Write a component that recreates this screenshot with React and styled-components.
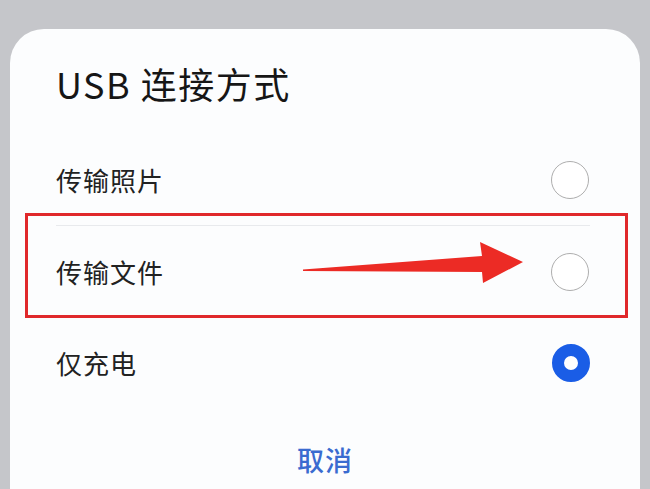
import React from 'react';
import styled, {createGlobalStyle} from 'styled-components';

const GlobalStyle = createGlobalStyle`
	html, body {
		margin: 0;
		padding: 0;
		background: #c5c6ca;
		overflow: hidden;
	}
	body {
		font-family: 'Noto Sans CJK SC', 'Noto Sans', sans-serif;
	}
`;

const Screen = styled.div`
	width: 650px;
	height: 489px;
	padding: 29px 10px 0 10px;
	box-sizing: border-box;
	overflow: hidden;
`;

const Sheet = styled.div`
	background: #fcfdfe;
	border-radius: 34px 34px 0 0;
	height: 480px;
	display: flex;
	flex-direction: column;
`;

const Title = styled.h1`
	margin: 0;
	padding: 32px 46px 0 46px;
	height: 104px;
	box-sizing: border-box;
	font-size: 36px;
	line-height: 44px;
	font-weight: 400;
	color: #161616;
	letter-spacing: 1.5px;
`;

const OptionList = styled.div`
	display: flex;
	flex-direction: column;
`;

const Row = styled.div`
	position: relative;
	height: ${(p) => p.$height}px;
	margin: 0 50px 0 46px;
	display: flex;
	align-items: center;
	justify-content: space-between;
	border-top: ${(p) => (p.$divider ? '1px solid #e8eaed' : '1px solid transparent')};
	box-sizing: border-box;
`;

const Label = styled.span`
	font-size: 26px;
	color: #222;
	letter-spacing: 1px;
`;

const Radio = styled.span`
	width: 38px;
	height: 38px;
	border-radius: 50%;
	box-sizing: border-box;
	border: ${(p) => (p.$checked ? '12px solid #1a5de6' : '1.5px solid #aeaeae')};
	background: #fff;
	margin-right: ${(p) => (p.$checked ? '0' : '1px')};
`;

const Highlight = styled.div`
	position: absolute;
	top: -13px;
	left: -31px;
	right: -38px;
	bottom: -1px;
	border: 3.5px solid #e0282b;
	pointer-events: none;
`;

const Arrow = styled.svg`
	position: absolute;
	left: 247px;
	top: 16px;
	width: 230px;
	height: 46px;
	overflow: visible;
`;

const Footer = styled.div`
	display: flex;
	justify-content: center;
	padding-top: 33px;
`;

const CancelButton = styled.button`
	border: none;
	background: none;
	padding: 0;
	font-family: inherit;
	font-size: 27px;
	font-weight: 500;
	color: #3a6bd0;
	letter-spacing: 1px;
`;

const options = [
	{id: 'photo', label: '传输照片', checked: false, height: 92},
	{id: 'file', label: '传输文件', checked: false, marked: true, height: 92},
	{id: 'charge', label: '仅充电', checked: true, height: 90},
];

const App = () => {
	return (
		<>
			<GlobalStyle />
			<Screen>
				<Sheet>
					<Title>USB 连接方式</Title>
					<OptionList>
						{options.map((opt, i) => (
							<Row key={opt.id} $divider={i === 1} $height={opt.height}>
								<Label>{opt.label}</Label>
								<Radio $checked={opt.checked} />
								{opt.marked && (
									<>
										<Highlight />
										<Arrow viewBox="0 0 230 46">
											<polygon
												points="0,27.5 179,14 177,0 220,20 180,41 179,30 0,29"
												fill="#ec2b25"
											/>
										</Arrow>
									</>
								)}
							</Row>
						))}
					</OptionList>
					<Footer>
						<CancelButton>取消</CancelButton>
					</Footer>
				</Sheet>
			</Screen>
		</>
	);
};

export default App;
